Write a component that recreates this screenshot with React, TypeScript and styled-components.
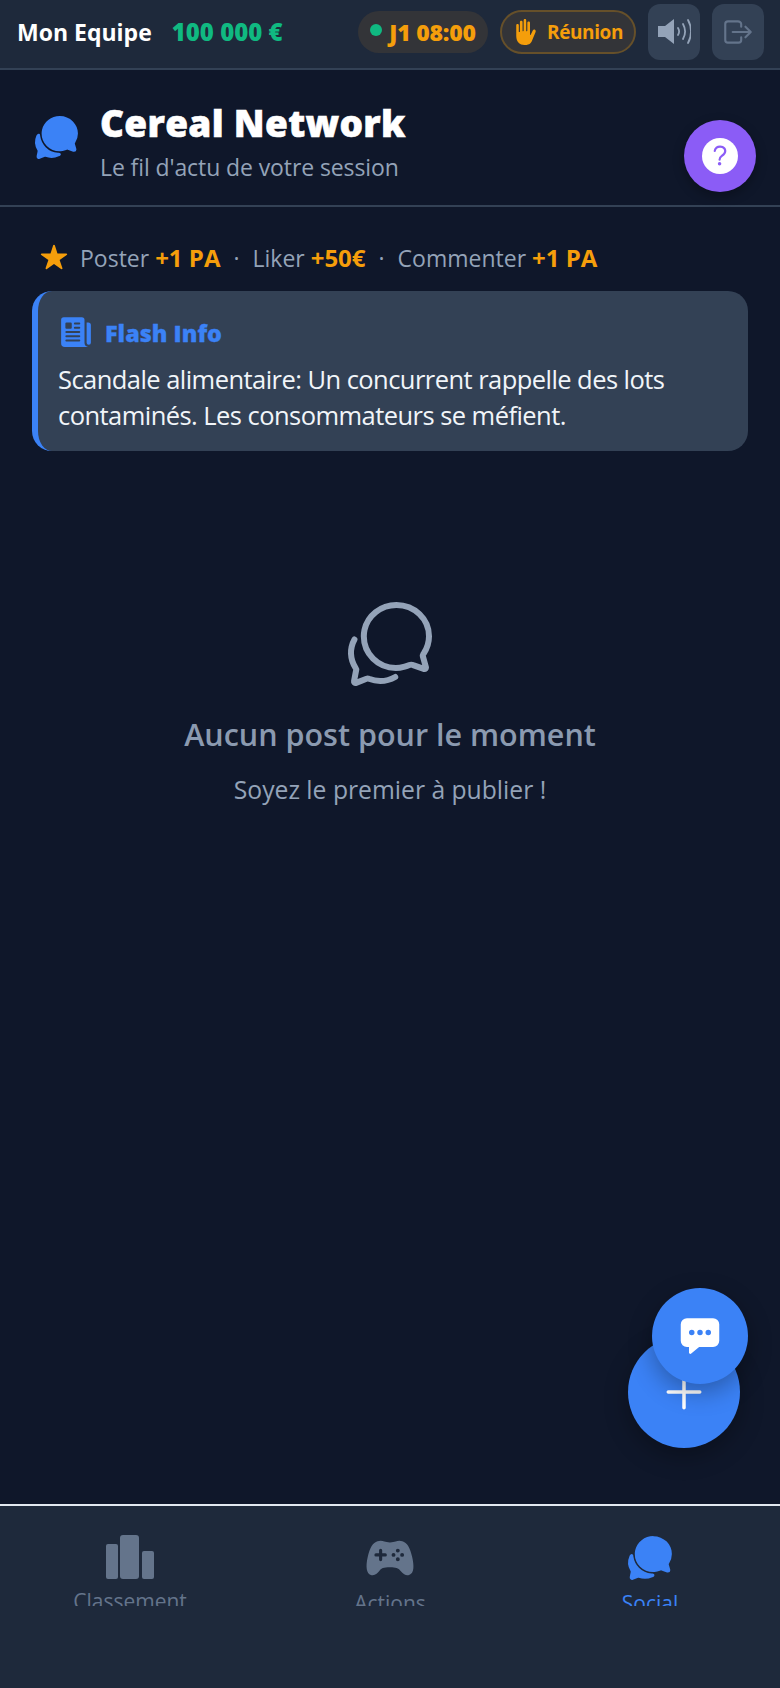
import styled, { createGlobalStyle } from "styled-components";
import {
  IoAdd,
  IoChatbubbles,
  IoChatbubblesOutline,
  IoChatboxEllipses,
  IoGameController,
  IoHandLeft,
  IoHelp,
  IoLogOutOutline,
  IoNewspaper,
  IoStar,
} from "react-icons/io5";

const GlobalStyle = createGlobalStyle`
  html, body { margin: 0; padding: 0; background: #0f172a; }
  * { box-sizing: border-box; }
  body { font-family: "Open Sans", "Noto Sans", sans-serif; }
`;

const Page = styled.div`
  position: relative;
  width: 780px;
  height: 1688px;
  display: flex;
  flex-direction: column;
  overflow: hidden;
  background: #0f172a;
`;

const TopBar = styled.header`
  height: 70px;
  display: flex;
  align-items: center;
  padding: 0 16px 5px 17px;
  background: #1e293b;
  border-bottom: 2px solid #334155;
`;

const TeamName = styled.span`
  font-size: 23px;
  font-weight: 700;
  color: #fff;
`;

const Money = styled.span`
  margin-left: 20px;
  font-size: 24px;
  font-weight: 800;
  color: #10b981;
`;

const TopActions = styled.div`
  margin-left: auto;
  display: flex;
  align-items: center;
  gap: 12px;
`;

const Clock = styled.div`
  width: 130px;
  height: 42px;
  display: flex;
  align-items: center;
  justify-content: center;
  gap: 7px;
  border-radius: 21px;
  background: #333438;
  color: #f59e0b;
  font-size: 23px;
  font-weight: 800;
  letter-spacing: -0.2px;
`;

const Dot = styled.span`
  width: 12px;
  height: 12px;
  margin-top: -3px;
  border-radius: 50%;
  background: #10b981;
`;

const Meeting = styled.div`
  width: 136px;
  height: 44px;
  display: flex;
  align-items: center;
  justify-content: center;
  gap: 8px;
  border-radius: 22px;
  border: 2px solid #66502a;
  background: #333438;
  color: #f59e0b;
  font-size: 19px;
  font-weight: 700;
  letter-spacing: -0.4px;
`;

const SquareButton = styled.div<{ $dim?: boolean }>`
  width: 52px;
  height: 56px;
  display: flex;
  align-items: center;
  justify-content: center;
  border-radius: 12px;
  background: #334155;
  color: ${(p) => (p.$dim ? "#64748b" : "#94a3b8")};
`;

const Header = styled.section`
  height: 137px;
  display: flex;
  align-items: center;
  gap: 19px;
  padding: 0 32px;
  border-bottom: 2px solid #334155;
`;

const HeaderText = styled.div`
  display: flex;
  flex-direction: column;
  padding-top: 8px;
`;

const Title = styled.h1`
  margin: 0;
  font-size: 37px;
  line-height: 46px;
  font-weight: 800;
  color: #fff;
  letter-spacing: 0.3px;
  -webkit-text-stroke: 0.6px #fff;
`;

const Subtitle = styled.p`
  margin: 5px 0 0;
  font-size: 23px;
  line-height: 32px;
  color: #94a3b8;
  letter-spacing: -0.1px;
`;

const HelpFab = styled.div`
  position: absolute;
  left: 684px;
  top: 120px;
  width: 72px;
  height: 72px;
  display: flex;
  align-items: center;
  justify-content: center;
  border-radius: 50%;
  background: #8b5cf6;
  box-shadow: 0 4px 12px rgba(0, 0, 0, 0.3);
`;

const HelpDisc = styled.div`
  width: 36px;
  height: 36px;
  display: flex;
  align-items: center;
  justify-content: center;
  border-radius: 50%;
  background: #fff;
  color: #8b5cf6;
`;

const Rewards = styled.div`
  display: flex;
  align-items: center;
  gap: 12px;
  margin: 32px 32px 0 40px;
  height: 36px;
  font-size: 23px;
  color: #94a3b8;
  white-space: pre;
`;

const RewardLine = styled.span``;

const Gain = styled.b`
  color: #f59e0b;
  font-size: 24px;
  font-weight: 700;
`;

const Separator = styled.span`
  margin: 0 13px;
`;

const Flash = styled.article`
  margin: 16px 32px 0;
  height: 160px;
  padding: 23px 20px 0;
  border-radius: 20px;
  border-left: 6px solid #3b82f6;
  background: #334155;
`;

const FlashHead = styled.div`
  display: flex;
  align-items: center;
  gap: 12px;
  height: 38px;
  color: #3b82f6;
  font-size: 23.4px;
  font-weight: 800;
  -webkit-text-stroke: 0.3px #3b82f6;
`;

const FlashIcon = styled(IoNewspaper)`
  margin-left: 1px;
  margin-top: -3px;
`;

const FlashBody = styled.p`
  margin: 9px 0 0;
  font-size: 25.5px;
  line-height: 36px;
  color: #f1f5f9;
  letter-spacing: -0.55px;
`;

const Empty = styled.section`
  flex: 1;
  display: flex;
  flex-direction: column;
  align-items: center;
  padding-top: 145px;
  color: #94a3b8;
`;

const EmptyTitle = styled.h2`
  margin: 21px 0 0;
  font-size: 30.5px;
  line-height: 42px;
  font-weight: 600;
  color: #8b9ab0;
`;

const EmptyText = styled.p`
  margin: 18px 0 0;
  font-size: 24.7px;
  line-height: 34px;
`;

const Fab = styled.div<{ $size: number; $left: number; $top: number }>`
  position: absolute;
  left: ${(p) => p.$left}px;
  top: ${(p) => p.$top}px;
  width: ${(p) => p.$size}px;
  height: ${(p) => p.$size}px;
  display: flex;
  align-items: center;
  justify-content: center;
  border-radius: 50%;
  background: #3b82f6;
  color: #fff;
  box-shadow: 0 8px 24px rgba(0, 0, 0, 0.3);
`;

const BottomNav = styled.nav`
  height: 184px;
  display: grid;
  grid-template-columns: repeat(3, 1fr);
  border-top: 2px solid #e2e8f0;
  background: #1e293b;
`;

const NavItem = styled.div<{ $active?: boolean }>`
  height: 100px;
  display: flex;
  flex-direction: column;
  align-items: center;
  padding-top: 29px;
  overflow: hidden;
  color: ${(p) => (p.$active ? "#3b82f6" : "#64748b")};
  font-size: 21px;
  line-height: 28px;
`;

const NavIcon = styled.div`
  height: 46px;
  margin-bottom: 8px;
  display: flex;
  align-items: center;
  justify-content: center;
`;

const SpeakerIcon = () => (
  <svg width="33" height="25" viewBox="0 0 33 25" fill="none">
    <path d="M0 7h7l9-7v25l-9-7H0z" fill="#94a3b8" />
    <path d="M20 9c1.4 2.2 1.4 4.8 0 7M25 5c2.6 4.6 2.6 10.4 0 15M30 1c4 7 4 16 0 23" stroke="#94a3b8" strokeWidth="1.8" strokeLinecap="round" />
  </svg>
);

const BarsIcon = () => (
  <svg width="48" height="44" viewBox="0 0 48 44" fill="currentColor">
    <rect x="0" y="9" width="12" height="35" rx="2" />
    <rect x="14" y="0" width="19" height="44" rx="3" />
    <rect x="36" y="16" width="12" height="28" rx="2" />
  </svg>
);

const App = () => (
  <>
    <GlobalStyle />
    <Page>
      <TopBar>
        <TeamName>Mon Equipe</TeamName>
        <Money>100 000 €</Money>
        <TopActions>
          <Clock>
            <Dot />
            J1 08:00
          </Clock>
          <Meeting>
            <IoHandLeft size={26} />
            Réunion
          </Meeting>
          <SquareButton>
            <SpeakerIcon />
          </SquareButton>
          <SquareButton $dim>
            <IoLogOutOutline size={34} />
          </SquareButton>
        </TopActions>
      </TopBar>
      <Header>
        <IoChatbubbles size={49} color="#3b82f6" />
        <HeaderText>
          <Title>Cereal Network</Title>
          <Subtitle>Le fil d'actu de votre session</Subtitle>
        </HeaderText>
      </Header>
      <HelpFab>
        <HelpDisc>
          <IoHelp size={28} />
        </HelpDisc>
      </HelpFab>
      <Rewards>
        <IoStar size={28} color="#f59e0b" />
        <RewardLine>
          Poster <Gain>+1 PA</Gain>
          <Separator>·</Separator>
          Liker <Gain>+50€</Gain>
          <Separator>·</Separator>
          Commenter <Gain>+1 PA</Gain>
        </RewardLine>
      </Rewards>
      <Flash>
        <FlashHead>
          <FlashIcon size={34} />
          Flash Info
        </FlashHead>
        <FlashBody>
          Scandale alimentaire: Un concurrent rappelle des lots contaminés. Les consommateurs se méfient.
        </FlashBody>
      </Flash>
      <Empty>
        <IoChatbubblesOutline size={96} />
        <EmptyTitle>Aucun post pour le moment</EmptyTitle>
        <EmptyText>Soyez le premier à publier !</EmptyText>
      </Empty>
      <BottomNav>
        <NavItem>
          <NavIcon>
            <BarsIcon />
          </NavIcon>
          Classement
        </NavItem>
        <NavItem>
          <NavIcon>
            <IoGameController size={50} />
          </NavIcon>
          Actions
        </NavItem>
        <NavItem $active>
          <NavIcon>
            <IoChatbubbles size={50} />
          </NavIcon>
          Social
        </NavItem>
      </BottomNav>
      <Fab $size={112} $left={628} $top={1336}>
        <IoAdd size={56} />
      </Fab>
      <Fab $size={96} $left={652} $top={1288}>
        <IoChatboxEllipses size={44} />
      </Fab>
    </Page>
  </>
);

export default App;
